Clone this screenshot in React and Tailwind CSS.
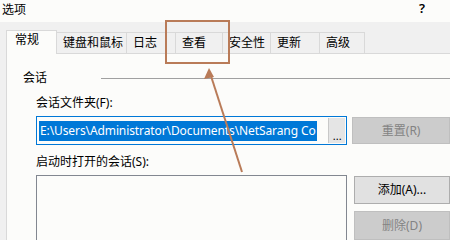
import React from 'react';

const FONT = { fontFamily: '"Noto Sans", "Noto Sans CJK SC", sans-serif' };

const tabs = [
  { label: '键盘和鼠标', w: 'w-[70px]' },
  { label: '日志', w: 'w-[49px]' },
  { label: '查看', w: 'w-[47px]' },
  { label: '安全性', w: 'w-[48px]' },
  { label: '更新', w: 'w-[49px]' },
  { label: '高级', w: 'w-[45px]' },
];

function Tab({ label, w }) {
  return (
    <div className={`${w} h-[22px] pl-[6px] flex items-center bg-[#f0f0f0] border-t border-r border-b border-[#d9d9d9] leading-none`}>
      {label}
    </div>
  );
}

export default function App() {
  return (
    <div className="w-[450px] h-[240px] overflow-hidden relative bg-[#f0f0f0] text-[12px] text-black" style={FONT}>
      {/* title bar */}
      <div className="h-[22px] bg-[#fcfcfa] flex items-start justify-between pl-[2px] pr-[25px]">
        <span className="leading-[20px]">选项</span>
        <span className="text-[13px] leading-[16px] font-semibold">?</span>
      </div>

      <div className="pl-[6px] pt-[8px]">
        {/* tabs */}
        <div className="flex items-end h-[24px]">
          <div className="w-[51px] h-[24px] pl-[8px] pt-[3px] bg-[#fcfcfa] border-t border-l border-r border-[#d9d9d9] leading-none">
            常规
          </div>
          {tabs.map((t) => (
            <Tab key={t.label} label={t.label} w={t.w} />
          ))}
          <div className="flex-1 border-b border-[#d9d9d9]" />
        </div>

        {/* panel */}
        <div className="bg-[#fcfcfa] border-l border-[#d9d9d9] h-[200px] pt-[16px]">
          <div className="flex items-center h-[16px] pl-[16px]">
            <span>会话</span>
            <div className="ml-[54px] flex-1 h-px bg-[#a0a0a0]" />
          </div>

          <div className="pl-[29px]">
            <div className="mt-[9px] h-[16px] leading-[16px]">会话文件夹(F):</div>

            <div className="mt-[5px] flex items-center">
              <div className="w-[312px] h-[29px] border border-[#0078d7] flex items-center pl-[2px] pr-px">
                <div className="flex-1 overflow-hidden whitespace-nowrap">
                  <span className="bg-[#0078d7] text-white leading-[20px] inline-block px-px tracking-[-0.1px]">
                    E:\Users\Administrator\Documents\NetSarang Co
                  </span>
                </div>
                <div className="w-[17px] h-[25px] bg-[#e5e5e5] border-l border-[#c8c8c8] flex items-end justify-center pb-[2px] leading-none text-[11px]">
                  ...
                </div>
              </div>
              <div className="ml-[5px] w-[98px] h-[27px] bg-[#cccccc] border border-[#bfbfbf] text-[#838383] flex items-center justify-center">
                重置(R)
              </div>
            </div>

            <div className="mt-[9px] h-[16px] leading-[16px]">启动时打开的会话(S):</div>

            <div className="mt-[5px] flex items-start">
              <div className="w-[312px] h-[80px] border border-[#828790] bg-[#fcfcfa]" />
              <div className="ml-[7px] flex flex-col">
                <div className="mt-px w-[96px] h-[28px] bg-[#e1e1e1] border border-[#adadad] flex items-center justify-center">
                  添加(A)...
                </div>
                <div className="mt-[7px] w-[96px] h-[29px] bg-[#cccccc] border border-[#bfbfbf] text-[#838383] flex items-center justify-center">
                  删除(D)
                </div>
              </div>
            </div>
          </div>
        </div>
      </div>

      {/* annotation overlay */}
      <svg className="absolute left-0 top-0 pointer-events-none" width="450" height="240" viewBox="0 0 450 240">
        <rect x="166" y="21" width="63" height="42" fill="none" stroke="#b97b58" strokeWidth="2" />
        <line x1="242" y1="172" x2="211" y2="76" stroke="#b97b58" strokeWidth="2" />
        <polygon points="209,68 204,79 214,77" fill="#b97b58" />
      </svg>
    </div>
  );
}
